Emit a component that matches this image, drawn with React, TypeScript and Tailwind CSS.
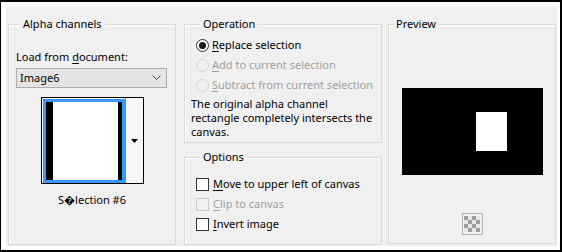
import React from "react";

const font = { fontFamily: '"Noto Sans", "DejaVu Sans", sans-serif' };

function Mn({ c }: { c: string }) {
  return <span className="underline underline-offset-2">{c}</span>;
}

function Radio({ checked, disabled, children }: { checked?: boolean; disabled?: boolean; children: React.ReactNode }) {
  return (
    <div className={`flex h-5 items-center ${disabled ? "text-[#a0a0a0]" : "text-black"}`}>
      <span
        className={`mr-[3px] flex h-[13px] w-[13px] items-center justify-center rounded-full border ${
          disabled ? "border-[#d4d4d4] bg-[#f0f0f0]" : "border-[#333333] bg-white"
        }`}
      >
        {checked && <span className="h-[7px] w-[7px] rounded-full bg-[#1a1a1a]" />}
      </span>
      <span>{children}</span>
    </div>
  );
}

function Check({ disabled, children }: { disabled?: boolean; children: React.ReactNode }) {
  return (
    <div className={`flex h-5 items-center ${disabled ? "text-[#a0a0a0]" : "text-black"}`}>
      <span
        className={`mr-[4px] h-[13px] w-[13px] border ${
          disabled ? "border-[#cccccc] bg-[#f0f0f0]" : "border-[#333333] bg-white"
        }`}
      />
      <span>{children}</span>
    </div>
  );
}

function Group({ title, className, children }: { title: string; className: string; children: React.ReactNode }) {
  return (
    <fieldset className={`border border-[#d9d9d9] shadow-[inset_1px_1px_0_#ffffff] ${className}`}>
      <legend className="ml-[4px] bg-[#f0f0f0] px-[3px] leading-4 text-black">{title}</legend>
      {children}
    </fieldset>
  );
}

export default function App() {
  return (
    <div
      style={font}
      className="h-[252px] w-[562px] border-b-2 border-l border-r-2 border-t-2 border-black bg-white pb-[4px] pl-[5px] pr-[3px] pt-[5px] text-[11px]"
    >
      <div className="flex h-full bg-[#f0f0f0] pl-[2px] pt-[9px]">
        <Group title="Alpha channels" className="h-[229px] w-[168px] px-[7px]">
          <div className="mt-[17px] leading-4">
            Load from <Mn c="d" />ocument:
          </div>
          <div className="mt-[3px] flex h-[20px] w-[151px] items-center justify-between border border-[#adadad] bg-[#e5e5e5] pl-[3px] pr-[5px]">
            <span>Image6</span>
            <svg width="9" height="6" viewBox="0 0 9 6">
              <polyline points="0.5,0.5 4.5,4.5 8.5,0.5" fill="none" stroke="#404040" strokeWidth="1" />
            </svg>
          </div>
          <div className="mx-auto mt-[9px] flex h-[87px] w-[103px] border border-black bg-white">
            <div className="ml-[1px] mt-[1px] flex h-[84px] w-[82px] border-[3px] border-[#3399ff]">
              <div className="w-[7px] bg-black" />
              <div className="flex-1 bg-white" />
              <div className="w-[4px] bg-black" />
            </div>
            <div className="flex flex-1 items-center justify-center border-l border-[#8a8a8a] bg-[#f7f7f7]">
              <svg width="7" height="4" viewBox="0 0 7 4">
                <polygon points="0,0 7,0 3.5,4" fill="#000" />
              </svg>
            </div>
          </div>
          <div className="mt-[8px] text-center leading-4">S{"\uFFFD"}lection #6</div>
        </Group>

        <div className="ml-[8px] flex w-[198px] flex-col">
          <Group title="Operation" className="h-[127px] w-[198px] pl-[11px] pr-[4px]">
            <div className="mt-[3px]">
              <Radio checked>
                <Mn c="R" />eplace selection
              </Radio>
              <Radio disabled>
                <Mn c="A" />dd to current selection
              </Radio>
              <Radio disabled>
                <Mn c="S" />ubtract from current selection
              </Radio>
            </div>
            <p className="-ml-[5px] mt-[2px] leading-[14px]">
              The original alpha channel
              <br />
              rectangle completely intersects the
              <br />
              canvas.
            </p>
          </Group>
          <Group title="Options" className="mt-[6px] h-[96px] w-[198px] pl-[11px]">
            <div className="mt-[9px]">
              <Check>
                <Mn c="M" />ove to upper left of canvas
              </Check>
              <Check disabled>
                <Mn c="C" />lip to canvas
              </Check>
              <Check>
                <Mn c="I" />nvert image
              </Check>
            </div>
          </Group>
        </div>

        <Group title="Preview" className="ml-[6px] h-[228px] w-[168px]">
          <div className="mx-auto mt-[56px] h-[87px] w-[141px] bg-black pl-[74px] pt-[24px]">
            <div className="h-[39px] w-[31px] bg-white" />
          </div>
          <div className="mx-auto mt-[38px] flex h-[22px] w-[21px] items-center justify-center border border-[#b4b4b4] bg-[#f0f0f0]">
            <div className="grid grid-cols-4">
              {[0, 1, 2, 3].map((r) =>
                [0, 1, 2, 3].map((c) => (
                  <div
                    key={`${r}-${c}`}
                    className={`h-[4px] w-[4px] ${(r + c) % 2 === 0 ? "bg-[#9c9c9c]" : "bg-[#e6e6e6]"}`}
                  />
                ))
              )}
            </div>
          </div>
        </Group>
      </div>
    </div>
  );
}
